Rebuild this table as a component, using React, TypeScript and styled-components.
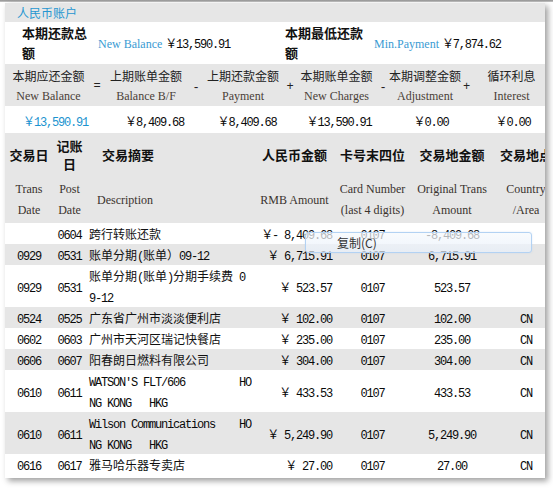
import React from "react";
import styled, { createGlobalStyle } from "styled-components";

const CJK = `"Noto Sans CJK SC", "Liberation Sans", sans-serif`;
const SERIF = `"Liberation Serif", "Noto Sans CJK SC", serif`;
const MONO = `"Liberation Mono", "Noto Sans CJK SC", monospace`;

const Global = createGlobalStyle`
  html, body { margin: 0; padding: 0; background: #fff; }
  body { font-family: ${CJK}; color: #1a1a1a; }
`;

const Page = styled.div`
  width: 553px;
  height: 490px;
  overflow: hidden;
  position: relative;
  background: #fff;
`;

const TopRule = styled.div`
  height: 2px;
  background: linear-gradient(#8f8f8f, #c9c9c9);
`;

const Card = styled.div`
  position: relative;
  margin: 1px 0 0 5px;
  width: 540px;
  overflow: hidden;
  background: #fff;
  padding-bottom: 3px;
  box-shadow: 3px 3px 6px rgba(0, 0, 0, 0.38);
`;

const SectionTitle = styled.div`
  height: 19px;
  line-height: 19px;
  padding-left: 12px;
  background: #e6e6e6;
  color: #2596d1;
  font-size: 12px;
  font-family: ${CJK};
`;

const DueRow = styled.div`
  display: flex;
  align-items: center;
  height: 42px;
  background: #fff;
`;

const DueLabel = styled.div<{ $w: number; $pl: number }>`
  width: ${(p) => p.$w}px;
  padding-left: ${(p) => p.$pl}px;
  box-sizing: border-box;
  font-family: ${CJK};
  font-weight: 700;
  font-size: 13px;
  line-height: 20px;
  color: #111;
`;

const DueValue = styled.div<{ $w: number; $pl: number }>`
  width: ${(p) => p.$w}px;
  padding-left: ${(p) => p.$pl}px;
  box-sizing: border-box;
  display: flex;
  align-items: baseline;
  gap: 3px;
  white-space: nowrap;
`;

const EnLink = styled.span`
  font-family: ${SERIF};
  font-size: 12px;
  color: #3a9bd3;
`;

const Num = styled.span<{ $blue?: boolean }>`
  font-family: ${MONO};
  font-size: 12px;
  letter-spacing: -1.2px;
  color: ${(p) => (p.$blue ? "#1b93cf" : "#0a0a0a")};
  white-space: pre;
`;

const FormulaRow = styled.div`
  display: flex;
  height: 42px;
  padding-top: 2px;
  box-sizing: border-box;
  background: #e6e6e6;
`;

const FormulaCell = styled.div<{ $w: number; $pl?: number }>`
  width: ${(p) => p.$w}px;
  padding-left: ${(p) => p.$pl ?? 0}px;
  box-sizing: border-box;
  display: flex;
  flex-direction: column;
  align-items: center;
  white-space: nowrap;
`;

const FormulaCn = styled.span`
  font-family: ${CJK};
  font-size: 12px;
  line-height: 20px;
  color: #222;
`;

const FormulaEn = styled.span`
  font-family: ${SERIF};
  font-size: 12px;
  line-height: 20px;
  color: #4a3f38;
`;

const Operator = styled.div<{ $w: number; $dy?: number }>`
  width: ${(p) => p.$w}px;
  display: flex;
  align-items: center;
  justify-content: center;
  font-family: ${MONO};
  font-size: 12px;
  color: #222;
  padding-top: ${(p) => p.$dy ?? 0}px;
  box-sizing: border-box;
`;

const ValuesRow = styled.div`
  display: flex;
  height: 25px;
  align-items: center;
  background: #fff;
`;

const ValueCell = styled.div<{ $w: number; $pl?: number }>`
  width: ${(p) => p.$w}px;
  padding-left: ${(p) => p.$pl ?? 0}px;
  box-sizing: border-box;
  text-align: center;
`;

const TxTable = styled.table`
  border-collapse: collapse;
  table-layout: fixed;
  width: 551px;
  margin-top: 2px;
`;

const HeadRow = styled.tr<{ $h: number }>`
  height: ${(p) => p.$h}px;
  background: #e6e6e6;
`;

const HeadCn = styled.th<{ $align?: string; $pl?: number }>`
  padding: 0 0 0 ${(p) => p.$pl ?? 0}px;
  text-align: ${(p) => p.$align ?? "center"};
  vertical-align: middle;
  font-family: ${CJK};
  font-weight: 700;
  font-size: 13px;
  line-height: 18px;
  color: #111;
`;

const HeadEn = styled.th<{ $align?: string; $pl?: number }>`
  padding: 0 0 0 ${(p) => p.$pl ?? 0}px;
  text-align: ${(p) => p.$align ?? "center"};
  vertical-align: middle;
  font-family: ${SERIF};
  font-weight: 400;
  font-size: 12px;
  line-height: 21px;
  color: #3a332e;
`;

const DataRow = styled.tr<{ $alt: boolean }>`
  background: ${(p) => (p.$alt ? "#e6e6e6" : "#fff")};
`;

const Cell = styled.td<{ $align?: string; $pl?: number; $pr?: number }>`
  padding: 0 ${(p) => p.$pr ?? 0}px 0 ${(p) => p.$pl ?? 0}px;
  text-align: ${(p) => p.$align ?? "center"};
  vertical-align: middle;
  font-family: ${CJK};
  font-size: 12px;
  color: #111;
  white-space: nowrap;
  overflow: hidden;
`;

const Line = styled.div`
  height: 21px;
  line-height: 21px;
  overflow: visible;
`;

const ContextMenu = styled.div`
  position: absolute;
  left: 300px;
  top: 229px;
  width: 227px;
  height: 21px;
  box-sizing: border-box;
  padding-left: 31px;
  border: 1px solid #b3d2f3;
  border-radius: 3px;
  background: linear-gradient(rgba(246, 249, 253, 0.72), rgba(232, 240, 250, 0.72));
  box-shadow: 0 0 2px rgba(160, 190, 230, 0.35);
  font-family: ${CJK};
  font-size: 12px;
  line-height: 19px;
  color: #333;
`;

const mix = (text: string) =>
  text
    .split(/([\x20-\x7e]+)/)
    .filter((s) => s.length > 0)
    .map((s, i) => (/^[\x20-\x7e]+$/.test(s) ? <Num key={i}>{s}</Num> : <span key={i}>{s}</span>));

type Tx = {
  t: string;
  p: string;
  d: string[];
  rmb: string;
  card: string;
  orig: string;
  c: string;
};

const txs: Tx[] = [
  { t: "", p: "0604", d: ["跨行转账还款"], rmb: "￥- 8,409.68", card: "0107", orig: "-8,409.68", c: "" },
  { t: "0929", p: "0531", d: ["账单分期(账单）09-12"], rmb: "￥ 6,715.91", card: "0107", orig: "6,715.91", c: "" },
  { t: "0929", p: "0531", d: ["账单分期(账单)分期手续费 0", "9-12"], rmb: "￥ 523.57", card: "0107", orig: "523.57", c: "" },
  { t: "0524", p: "0525", d: ["广东省广州市淡淡便利店"], rmb: "￥ 102.00", card: "0107", orig: "102.00", c: "CN" },
  { t: "0602", p: "0603", d: ["广州市天河区瑞记快餐店"], rmb: "￥ 235.00", card: "0107", orig: "235.00", c: "CN" },
  { t: "0606", p: "0607", d: ["阳春朗日燃料有限公司"], rmb: "￥ 304.00", card: "0107", orig: "304.00", c: "CN" },
  { t: "0610", p: "0611", d: ["WATSON'S FLT/606         HO", "NG KONG   HKG"], rmb: "￥ 433.53", card: "0107", orig: "433.53", c: "CN" },
  { t: "0610", p: "0611", d: ["Wilson Communications    HO", "NG KONG   HKG"], rmb: "￥ 5,249.90", card: "0107", orig: "5,249.90", c: "CN" },
  { t: "0616", p: "0617", d: ["雅马哈乐器专卖店"], rmb: "￥ 27.00", card: "0107", orig: "27.00", c: "CN" },
];

const formula = [
  { cn: "本期应还金额", en: "New Balance", w: 87 },
  { op: "=", w: 10, dy: 0 },
  { cn: "上期账单金额", en: "Balance B/F", w: 88 },
  { op: "-", w: 12, dy: 4 },
  { cn: "上期还款金额", en: "Payment", w: 82 },
  { op: "+", w: 12, dy: 2 },
  { cn: "本期账单金额", en: "New Charges", w: 81 },
  { op: "-", w: 12, dy: 4 },
  { cn: "本期调整金额", en: "Adjustment", w: 72 },
  { op: "+", w: 11, dy: 2 },
  { cn: "循环利息", en: "Interest", w: 73, pl: 6 },
];

const values = [
  { v: "￥13,590.91", w: 101, blue: true },
  { v: "￥8,409.68", w: 97 },
  { v: "￥8,409.68", w: 88 },
  { v: "￥13,590.91", w: 96 },
  { v: "￥0.00", w: 88 },
  { v: "￥0.00", w: 70, pl: 6 },
];

export default function App() {
  return (
    <Page>
      <Global />
      <TopRule />
      <Card>
        <SectionTitle>人民币账户</SectionTitle>
        <DueRow>
          <DueLabel $w={87} $pl={17}>本期还款总额</DueLabel>
          <DueValue $w={190} $pl={6}>
            <EnLink>New Balance</EnLink>
            <Num>￥13,590.91</Num>
          </DueValue>
          <DueLabel $w={90} $pl={3}>本期最低还款额</DueLabel>
          <DueValue $w={173} $pl={2}>
            <EnLink>Min.Payment</EnLink>
            <Num>￥7,874.62</Num>
          </DueValue>
        </DueRow>
        <FormulaRow>
          {formula.map((f, i) =>
            f.op ? (
              <Operator key={i} $w={f.w} $dy={f.dy}>{f.op}</Operator>
            ) : (
              <FormulaCell key={i} $w={f.w} $pl={f.pl}>
                <FormulaCn>{f.cn}</FormulaCn>
                <FormulaEn>{f.en}</FormulaEn>
              </FormulaCell>
            )
          )}
        </FormulaRow>
        <ValuesRow>
          {values.map((v, i) => (
            <ValueCell key={i} $w={v.w} $pl={v.pl}>
              <Num $blue={v.blue}>{v.v}</Num>
            </ValueCell>
          ))}
        </ValuesRow>
        <TxTable>
          <colgroup>
            <col style={{ width: 48 }} />
            <col style={{ width: 33 }} />
            <col style={{ width: 166 }} />
            <col style={{ width: 85 }} />
            <col style={{ width: 71 }} />
            <col style={{ width: 88 }} />
            <col style={{ width: 60 }} />
          </colgroup>
          <thead>
            <HeadRow $h={44}>
              <HeadCn>交易日</HeadCn>
              <HeadCn>记账日</HeadCn>
              <HeadCn $align="left" $pl={16}>交易摘要</HeadCn>
              <HeadCn>人民币金额</HeadCn>
              <HeadCn>卡号末四位</HeadCn>
              <HeadCn>交易地金额</HeadCn>
              <HeadCn>交易地点</HeadCn>
            </HeadRow>
            <HeadRow $h={46}>
              <HeadEn>Trans Date</HeadEn>
              <HeadEn>Post Date</HeadEn>
              <HeadEn $align="left" $pl={11}>Description</HeadEn>
              <HeadEn>RMB Amount</HeadEn>
              <HeadEn>Card Number (last 4 digits)</HeadEn>
              <HeadEn>Original Trans Amount</HeadEn>
              <HeadEn>Country /Area</HeadEn>
            </HeadRow>
          </thead>
          <tbody>
            {txs.map((tx, i) => (
              <DataRow key={i} $alt={i % 2 === 1}>
                <Cell><Line><Num>{tx.t}</Num></Line></Cell>
                <Cell><Line><Num>{tx.p}</Num></Line></Cell>
                <Cell $align="left" $pl={3}>
                  {tx.d.map((line, j) => (
                    <Line key={j}>{mix(line)}</Line>
                  ))}
                </Cell>
                <Cell $align="right" $pr={5}><Line><Num>{tx.rmb}</Num></Line></Cell>
                <Cell><Line><Num>{tx.card}</Num></Line></Cell>
                <Cell><Line><Num>{tx.orig}</Num></Line></Cell>
                <Cell><Line><Num>{tx.c}</Num></Line></Cell>
              </DataRow>
            ))}
          </tbody>
        </TxTable>
        <ContextMenu>复制(C)</ContextMenu>
      </Card>
    </Page>
  );
}
